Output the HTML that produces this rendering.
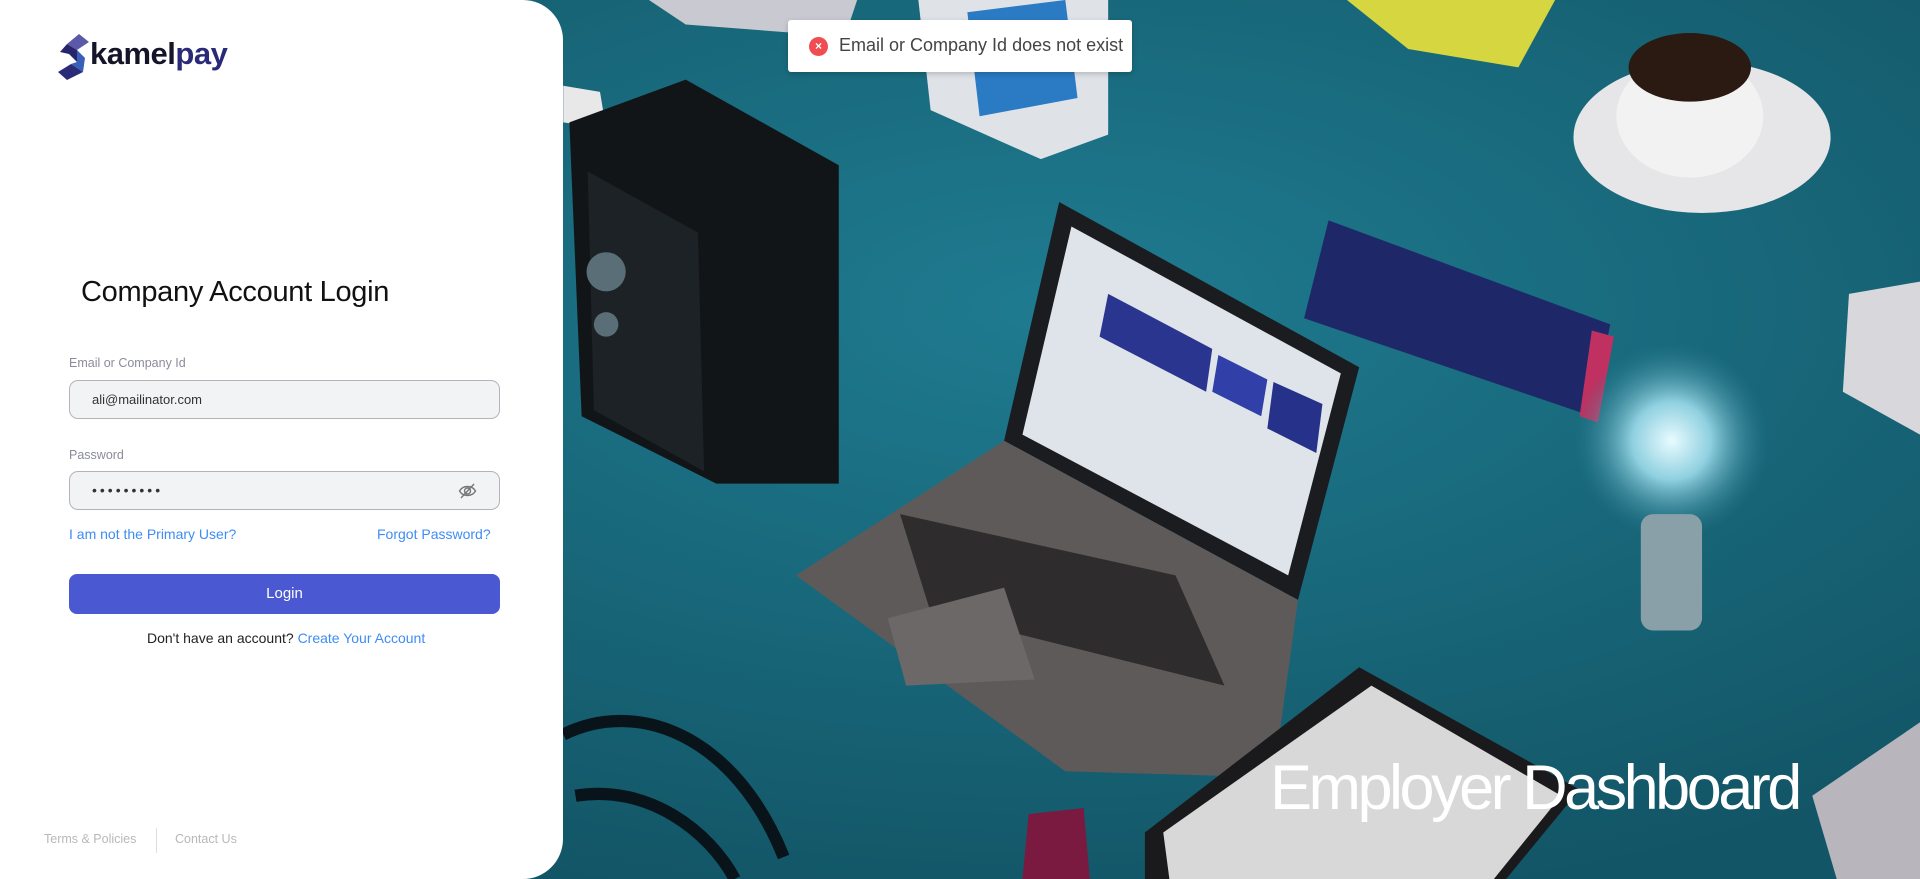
<!DOCTYPE html>
<html><head><meta charset="utf-8"><style>
*{margin:0;padding:0;box-sizing:border-box}
body{width:1920px;height:879px;overflow:hidden;font-family:"Liberation Sans",sans-serif;background:#176578;position:relative}
#bg{position:absolute;left:0;top:0;width:1920px;height:879px}
.panel{position:absolute;left:0;top:0;width:563px;height:879px;background:#fff;border-radius:0 40px 40px 0}
.title{position:absolute;left:81px;top:276px;font-size:29px;color:#111;letter-spacing:-0.3px}
.lbl{position:absolute;left:69px;font-size:12.5px;color:#8a8c9c}
.inp{position:absolute;left:69px;width:431px;height:39px;background:#f2f3f5;border:1px solid #b4b4b8;border-radius:9px;font-size:13px;color:#333;padding-left:22px;line-height:37px}
.lnk{position:absolute;top:526px;font-size:14px;color:#3f8cf5}
.btn{position:absolute;left:69px;top:574px;width:431px;height:40px;background:#4a58d1;border-radius:8px;color:#fff;font-size:15px;text-align:center;line-height:40px}
.na{position:absolute;left:147px;top:630px;font-size:14px;color:#222}
.na span{color:#3f8cf5}
.ft{position:absolute;top:832px;font-size:12.5px;color:#b8b8bc}
.toast{position:absolute;left:788px;top:20px;width:344px;height:52px;background:#fff;border-radius:3px;box-shadow:0 2px 6px rgba(0,0,0,.2)}
.toast .ic{position:absolute;left:21px;top:17px;width:19px;height:19px;border-radius:50%;background:#f04d52;color:#fff;font-size:12px;text-align:center;line-height:19px;font-weight:bold}
.toast .t{position:absolute;left:51px;top:15px;font-size:18px;color:#444}
.ed{position:absolute;left:1270px;top:752px;font-size:63px;color:#fff;letter-spacing:-3.5px;font-weight:normal}
</style></head><body>
<svg id="bg" viewBox="0 0 1568 718" preserveAspectRatio="none">
<defs>
<radialGradient id="g1" cx="0.55" cy="0.35" r="0.7"><stop offset="0" stop-color="#1f7b90"/><stop offset="1" stop-color="#125566"/></radialGradient>
<radialGradient id="bulb" cx="0.5" cy="0.5" r="0.5"><stop offset="0" stop-color="#e8fbff"/><stop offset="0.4" stop-color="#8fd0e0"/><stop offset="1" stop-color="#2a7d90" stop-opacity="0"/></radialGradient>
</defs>
<rect width="1568" height="718" fill="url(#g1)"/>
<polygon points="530,0 700,0 690,30 560,20" fill="#c9c9d2"/>
<polygon points="750,0 905,0 905,110 850,130 760,90" fill="#dfe3e8"/>
<polygon points="790,10 870,0 880,80 800,95" fill="#2a7bc4"/>
<polygon points="1100,0 1270,0 1240,55 1150,40" fill="#d6d640"/>
<polygon points="460,70 490,75 495,105 460,100" fill="#e8e8e8"/>
<ellipse cx="1390" cy="112" rx="105" ry="62" fill="#e6e6e8"/>
<ellipse cx="1380" cy="95" rx="60" ry="50" fill="#f2f2f2"/>
<ellipse cx="1380" cy="55" rx="50" ry="28" fill="#2a1a12"/>
<polygon points="465,100 560,65 685,135 685,395 585,395 475,340" fill="#121518"/>
<polygon points="480,140 570,190 575,385 485,335" fill="#1c2226"/>
<circle cx="495" cy="222" r="16" fill="#5a6e78"/><circle cx="495" cy="265" r="10" fill="#5a6e78"/>
<polygon points="865,165 1110,300 1060,490 820,360" fill="#1a1c20"/>
<polygon points="875,185 1095,305 1052,470 835,355" fill="#dfe3ea"/>
<polygon points="905,240 990,285 985,320 898,275" fill="#2a3590"/>
<polygon points="995,290 1035,310 1030,340 990,320" fill="#3040a8"/>
<polygon points="1040,312 1080,330 1075,370 1035,350" fill="#26328a"/>
<polygon points="820,360 1060,490 1040,635 870,630 650,470" fill="#5f5a5a"/>
<polygon points="735,420 960,470 1000,560 760,500" fill="#2e2c2c"/>
<polygon points="725,505 820,480 845,555 740,560" fill="#6c6868"/>
<polygon points="1085,180 1315,265 1300,340 1065,260" fill="#1e2868"/>
<polygon points="1300,270 1318,275 1305,345 1290,340" fill="#c03060"/>
<circle cx="1365" cy="360" r="80" fill="url(#bulb)"/>
<rect x="1340" y="420" width="50" height="95" rx="10" fill="#8aa0a8"/>
<polygon points="1510,240 1568,230 1568,355 1505,320" fill="#d8d8dc"/>
<polygon points="1480,650 1568,590 1568,718 1500,718" fill="#b8b6bc"/>
<polygon points="1110,545 1290,645 1230,718 935,718 935,680" fill="#1a1a1c"/>
<polygon points="1120,560 1275,650 1220,718 955,718 950,680" fill="#d8d8d8"/>
<path d="M460 600 C520 570 600 600 640 700 M470 650 C530 640 580 680 600 718" stroke="#08141a" stroke-width="10" fill="none"/>
<polygon points="840,665 885,660 890,718 835,718" fill="#7a1a40"/>
</svg>

<div class="panel">
<svg style="position:absolute;left:57px;top:32px" width="34" height="49" viewBox="0 0 34 49">
<polygon points="10,12 22,2 32,10 20,18" fill="#5c5aa8"/>
<polygon points="3,20 10,12 20,18 20,30 12,22" fill="#26246a"/>
<polygon points="20,18 28,26 26,40 14,32 20,30" fill="#3a5fb8"/>
<polygon points="1,40 14,32 26,40 10,48" fill="#2a2a78"/>
</svg>
<div style="position:absolute;left:90px;top:36px;font-size:31px;font-weight:bold;letter-spacing:-0.5px;color:#15152a">kamel<span style="color:#2a2a78">pay</span></div>

<div class="title">Company Account Login</div>
<div class="lbl" style="top:356px">Email or Company Id</div>
<div class="inp" style="top:380px">ali@mailinator.com</div>
<div class="lbl" style="top:448px">Password</div>
<div class="inp" style="top:471px;letter-spacing:3px;font-size:14px">•••••••••
<svg style="position:absolute;right:22px;top:10px" width="19" height="18" viewBox="0 0 19 18"><path d="M1.5 9 C5 3 14 3 17.5 9 C14 15 5 15 1.5 9Z" fill="none" stroke="#777" stroke-width="1.4"/><circle cx="9.5" cy="9" r="3" fill="none" stroke="#777" stroke-width="1.4"/><line x1="3" y1="16" x2="16" y2="2" stroke="#777" stroke-width="1.4"/></svg>
</div>
<div class="lnk" style="left:69px">I am not the Primary User?</div>
<div class="lnk" style="left:377px">Forgot Password?</div>
<div class="btn">Login</div>
<div class="na">Don't have an account? <span>Create Your Account</span></div>
<div class="ft" style="left:44px">Terms &amp; Policies</div>
<div style="position:absolute;left:156px;top:828px;width:1px;height:25px;background:#ddd"></div>
<div class="ft" style="left:175px">Contact Us</div>
</div>

<div class="toast"><div class="ic">×</div><div class="t">Email or Company Id does not exist</div></div>
<div class="ed">Employer Dashboard</div>
</body></html>
